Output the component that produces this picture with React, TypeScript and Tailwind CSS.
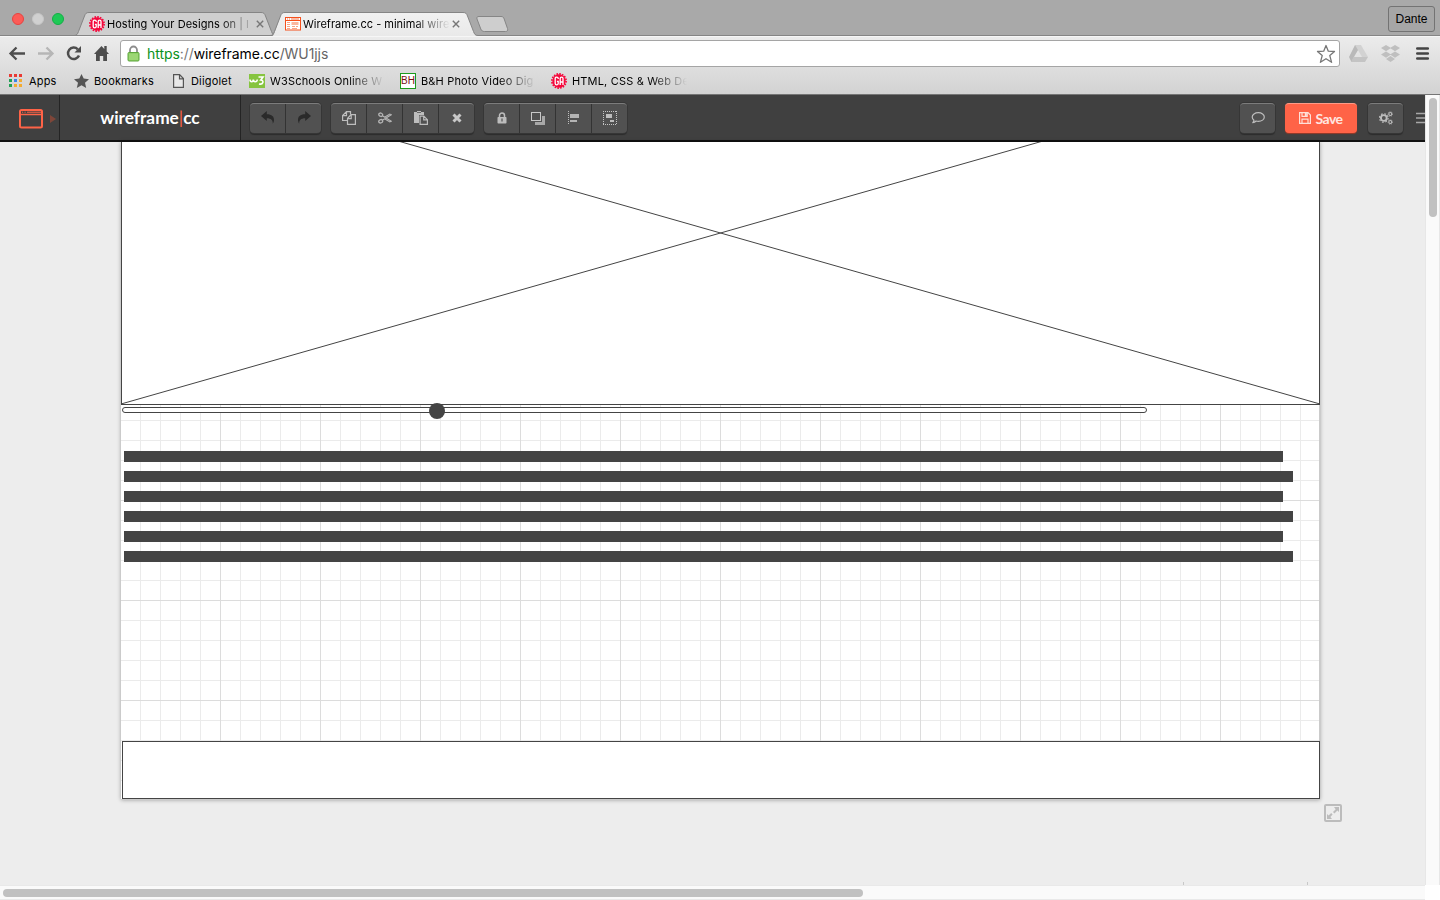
import React from "react";

function GaBadge() {
  return (
    <svg width="16" height="16" viewBox="0 0 16 16" className="block shrink-0">
      <circle cx="8" cy="8" r="6.700" fill="#f5083c" />
      <circle cx="8" cy="8" r="7.100" fill="none" stroke="#f5083c" strokeWidth="1.700" strokeDasharray="1.600 1.190" />
      <path d="M7.200 6V5.300c0-1.700-3-1.700-3 0v5.200c0 1.700 3 1.700 3 0V8.300H5.900" fill="none" stroke="#fff" strokeWidth="1.300" />
      <path d="M9.200 12V5.500c0-1.900 2.800-1.900 2.800 0V12M9.200 9h2.800" fill="none" stroke="#fff" strokeWidth="1.300" />
    </svg>
  );
}

function WireIcon() {
  return (
    <svg width="16" height="14" viewBox="0 0 16 14" className="block shrink-0">
      <rect x=".5" y=".5" width="15" height="12.500" fill="#fff" stroke="#f5501c" />
      <path d="M1 3.500h14" stroke="#f5501c" />
      <path d="M2 2h1M4 2h1M6 2h8" stroke="#f5501c" strokeWidth=".8" />
      <path d="M2 5.500h3M2 7.500h3M2 9.500h3M2 11.500h3M7 9.500h3M7 11.500h5M11 9.500h2" stroke="#f9a384" />
      <rect x="6.500" y="5" width="7" height="3" fill="#fbb79f" />
    </svg>
  );
}

function CloseX() {
  return (
    <svg width="8" height="8" viewBox="0 0 8 8" className="block shrink-0">
      <path d="M.8.8l6.400 6.400M7.200.8L.8 7.200" stroke="#777" strokeWidth="1.400" />
    </svg>
  );
}

const fade =
  "[mask-image:linear-gradient(to_right,#000_calc(100%_-_36px),transparent)]";

function TabStrip() {
  return (
    <div className="relative h-9 shrink-0 bg-[#a9a9a9]">
      <svg className="absolute inset-0" width="1440" height="36" viewBox="0 0 1440 36">
        <defs>
          <linearGradient id="tabFill" x1="0" y1="0" x2="0" y2="1">
            <stop offset="0" stopColor="#f1f1f1" />
            <stop offset="1" stopColor="#e9e9e9" />
          </linearGradient>
        </defs>
        <path d="M0 35.500H1440" stroke="#858585" />
        <path d="M74 35.500c3 0 3.500-1.500 4.500-4l6-15.500c1-2.600 1.800-3.500 4.500-3.500h172c2.700 0 3.500.9 4.500 3.500l6 15.500c1 2.500 1.500 4 4.500 4z" fill="#cfcfcf" stroke="#858585" />
        <path d="M270 36.500c3 0 3.500-1.500 4.500-4l6-16.500c1-2.600 1.800-3.500 4.500-3.500h178c2.700 0 3.500.9 4.500 3.500l6 15.500c1 2.500 1.500 4 4.500 4v1z" fill="url(#tabFill)" />
        <path d="M270 35.500c3 0 3.500-1.500 4.500-4l6-15.500c1-2.600 1.800-3.500 4.500-3.500h178c2.700 0 3.500.9 4.500 3.500l6 15.500c1 2.500 1.500 4 4.500 4" fill="none" stroke="#858585" />
        <path d="M479 16.500h22c2 0 2.600.8 3.200 2.500l3.300 9.500c.6 2-.2 3-2 3h-21c-2 0-3-.8-3.700-2.500L477 19c-.6-1.800.3-2.500 2-2.500z" fill="#cecece" stroke="#868686" />
      </svg>
      <div className="relative flex h-9 items-start">
        <div className="flex gap-2 pl-3 pt-[13px]">
          <div className="size-3 rounded-full border border-[#e64340] bg-[#fc5b57]" />
          <div className="size-3 rounded-full border border-[#c6c6c6] bg-[#d0d0d0]" />
          <div className="size-3 rounded-full border border-[#14ae46] bg-[#1fc956]" />
        </div>
        <div className="ml-[25px] mt-4 flex h-4 w-[175px] items-center">
          <GaBadge />
          <div className={`ml-[2px] w-[148px] overflow-hidden whitespace-nowrap font-[Inter,sans-serif] text-[11px] leading-4 tracking-[0.04px] text-black ${fade}`}>
            Hosting Your Designs on | I
          </div>
          <div className="ml-px">
            <CloseX />
          </div>
        </div>
        <div className="ml-[21px] mt-4 flex h-4 w-[175px] items-center">
          <WireIcon />
          <div className={`ml-[2px] w-[147px] overflow-hidden whitespace-nowrap font-[Inter,sans-serif] text-[11px] leading-4 text-black ${fade}`}>
            Wireframe.cc - minimal wire
          </div>
          <div className="ml-[2px]">
            <CloseX />
          </div>
        </div>
        <div className="ml-auto mr-[5px] mt-[6px] flex h-[26px] w-[47px] items-center justify-center rounded-[3px] border border-[#737373] bg-[#a6a6a6] font-['Liberation_Sans',Arial,sans-serif] text-xs text-black">
          Dante
        </div>
      </div>
    </div>
  );
}

function AddressBar() {
  return (
    <div className="flex h-8 shrink-0 items-start border-t border-[#f6f6f6] pt-[3px]">
      <svg width="120" height="28" viewBox="0 0 120 28" className="block shrink-0">
        <path d="M10.500 13.500H25M16.500 7.500l-6 6 6 6" fill="none" stroke="#4d4d4d" strokeWidth="2.300" />
        <path d="M38 13.500h14M46.500 7.500l6 6-6 6" fill="none" stroke="#b6b6b6" strokeWidth="2.300" />
        <path d="M77.800 9.300A5.700 5.700 0 1 0 79 15.500" fill="none" stroke="#4d4d4d" strokeWidth="2.500" />
        <path d="M81 6v6.500h-6.500z" fill="#4d4d4d" />
        <path d="M94 14l7.500-8 2.800 3V6h2.400v5.500L109 14h-2v7h-3.800v-5h-3.400v5H96v-7z" fill="#4d4d4d" />
      </svg>
      <div className="flex h-[27px] w-[1220px] items-center rounded-[3px] border border-[#a5a5a5] bg-white pl-[6px]">
        <svg width="13" height="17" viewBox="0 0 13 17" className="block">
          <path d="M3 8V5a3.500 3.500 0 0 1 7 0v3" fill="none" stroke="#8d8d8d" strokeWidth="1.800" />
          <rect x="1" y="7.500" width="11" height="8.500" rx="1" fill="#8fd067" stroke="#5da63c" />
          <path d="M2 10h9M2 12h9M2 14h9" stroke="#b0e08c" strokeWidth=".8" />
        </svg>
        <div className="ml-[7px] whitespace-nowrap font-[Inter,sans-serif] text-[14px] leading-5 tracking-[-0.07px] text-black">
          <span className="text-[#0b9220]">https</span>
          <span className="text-[#777]">://</span>wireframe.cc<span className="text-[#666]">/WU1jjs</span>
        </div>
        <svg width="20" height="20" viewBox="0 0 20 20" className="ml-auto mr-[3px] block">
          <path d="M10 1.500l2.300 5.700 6.200.3-4.700 4.100 1.800 6.700L10 14.700l-5.600 3.600 1.800-6.700-4.700-4.100 6.200-.3z" fill="#fff" stroke="#777" strokeWidth="1.300" strokeLinejoin="round" />
        </svg>
      </div>
      <svg width="100" height="28" viewBox="0 0 100 28" className="block shrink-0">
        <path d="M15 5h6l-6.500 11-3 6L9 17z" fill="#b9b9b9" />
        <path d="M15 5h6l7 12h-6z" fill="#d2d2d2" />
        <path d="M13.500 17H28l-3 5H11z" fill="#c4c4c4" />
        <path d="M46 5l5 3-5 3.200L41 8zM55 5l5 3-5 3.200L50 8zM46 11.600l5 3-5 3.200-5-3.200zM55 11.600l5 3-5 3.200-5-3.200zM50.500 16l4.500 3-4.500 3-4.500-3z" fill="#bfbfbf" />
        <path d="M77.300 8.500h10.500M77.300 13.500h10.500M77.300 18.500h10.500" stroke="#444" strokeWidth="2.600" strokeLinecap="round" />
      </svg>
    </div>
  );
}

const label =
  "whitespace-nowrap overflow-hidden font-[Inter,sans-serif] text-[11px] leading-4 tracking-[0.17px] text-black";

function Bookmarks() {
  return (
    <div className="flex h-[27px] shrink-0 items-center border-b border-[#757575] pl-[9px]">
      <svg width="13" height="14" viewBox="0 0 13 14" className="block">
        <path d="M0 1.500h3M5 1.500h3M10 1.500h3" stroke="#e93a34" strokeWidth="3" />
        <path d="M0 6.500h3M0 11.500h3" stroke="#22a155" strokeWidth="3" />
        <path d="M5 6.500h3" stroke="#3b84e8" strokeWidth="3" />
        <path d="M10 6.500h3M5 11.500h3M10 11.500h3" stroke="#f3ab31" strokeWidth="3" />
      </svg>
      <div className={`${label} ml-[7px] w-[45px]`}>Apps</div>
      <svg width="15" height="14" viewBox="0 0 15 14" className="block">
        <path d="M7.500 0l2.200 4.600 5.300.6-4 3.500L12.200 14l-4.700-2.800L2.800 14 4 8.700 0 5.200l5.300-.6z" fill="#555" />
      </svg>
      <div className={`${label} ml-[5px] w-[79px]`}>Bookmarks</div>
      <svg width="11" height="14" viewBox="0 0 11 14" className="block">
        <path d="M.6.600h6l3.800 4v8.800H.6zM6.500.8v4h4" fill="#e8e8e8" stroke="#555" strokeWidth="1.200" />
      </svg>
      <div className={`${label} ml-[7px] w-[58px]`}>Diigolet</div>
      <svg width="16" height="14" viewBox="0 0 16 14" className="block">
        <rect width="16" height="14" fill="#86c440" />
        <path d="M1 5.500c0 3 3.300 3 3.300 0 0 3 3.700 3 4 0M9.500 3h4.500l-2.200 3c3.500.2 2.500 5-1.800 4" fill="none" stroke="#fff" strokeWidth="1.600" />
      </svg>
      <div className={`${label} ml-[5px] w-[115px] ${fade}`}>W3Schools Online W</div>
      <div className="ml-[15px] flex size-4 items-center justify-center border border-[#1d9a1d] bg-white font-['Liberation_Sans',Arial,sans-serif] text-[10px] leading-none text-[#7b0d12]">
        BH
      </div>
      <div className={`${label} ml-[5px] w-[115px] ${fade}`}>B&amp;H Photo Video Dig</div>
      <div className="ml-[15px]">
        <GaBadge />
      </div>
      <div className={`${label} ml-[5px] w-[115px] ${fade}`}>HTML, CSS &amp; Web De</div>
    </div>
  );
}

function ToolGroup({ children }: { children: React.ReactNode }) {
  return (
    <div className="flex h-[30px] divide-x divide-[#333] overflow-hidden rounded-[4px] border-t border-[#7c7c7c] bg-[#515151] text-[#bdbdbd] shadow-[0_0_0_1px_#363636,0_2px_1px_#2c2c2c]">
      {children}
    </div>
  );
}

function Tool({ children }: { children: React.ReactNode }) {
  return <div className="flex h-[29px] w-9 items-center justify-center pb-[2px] last:w-[35px]">{children}</div>;
}

function Bend({ flip }: { flip?: boolean }) {
  return (
    <svg width="14" height="13" viewBox="0 0 14 13" className={flip ? "-scale-x-100" : ""}>
      <path d="M0 5L5.800 0v3.200c5 0 7.600 2.300 7.200 6.300-.1 1.300-.6 2.300-1.200 3.200.2-3.600-1.600-5.400-6-5.500V10z" fill="#2a2a2a" />
    </svg>
  );
}

function Gear({ x, y, r, w }: { x: number; y: number; r: number; w: number }) {
  const step = (2 * Math.PI * (r + w * 0.75)) / 16;
  return (
    <g fill="none" stroke="#bdbdbd">
      <circle cx={x} cy={y} r={r} strokeWidth={w} />
      <circle cx={x} cy={y} r={r + w * 0.75} strokeWidth={w * 0.6} strokeDasharray={`${step} ${step}`} />
    </g>
  );
}

function Toolbar() {
  return (
    <div className="flex h-[47px] shrink-0 overflow-hidden border-b-2 border-[#111] bg-[#404040]">
      <div className="flex w-[60px] shrink-0 items-center border-r border-[#242424] pl-[19px] pt-[2px]">
        <svg width="37" height="20" viewBox="0 0 37 20" className="block">
          <rect x="1" y="1" width="22" height="17.500" rx="1.500" fill="none" stroke="#ff6347" strokeWidth="2" />
          <path d="M1 5.500h22" stroke="#ff6347" strokeWidth="1.500" />
          <path d="M3 3.200h1.200M5.500 3.200h1.200M8 3.200h14" stroke="#ff6347" strokeWidth="1" />
          <path d="M31 6l6 4-6 4z" fill="#7f4639" />
        </svg>
      </div>
      <div className="flex w-[181px] shrink-0 items-center justify-center border-r border-[#242424] font-[Lato,sans-serif] text-[17.300px] font-bold text-white">
        wireframe<span className="font-normal text-[#ff6347]">|</span>cc
      </div>
      <div className="flex shrink-0 gap-[10px] pl-[9px] pt-2">
        <ToolGroup>
          <Tool><Bend /></Tool>
          <Tool><Bend flip /></Tool>
        </ToolGroup>
        <ToolGroup>
          <Tool>
            <svg width="14" height="14" viewBox="0 0 14 14" fill="none" stroke="#bdbdbd" strokeWidth="1.200">
              <path d="M5.500 9.500H.6V4.500L4.500.6h4v3M4.500.600v4H.6" />
              <path d="M5.500 7.500l3.500-3.900h4.400v9.800H5.500zM9.200 3.600v4H5.500" />
            </svg>
          </Tool>
          <Tool>
            <svg width="14" height="12" viewBox="0 0 14 12" fill="none" stroke="#b4b4b4" strokeWidth="1.300">
              <ellipse cx="2.700" cy="2.700" rx="2" ry="1.600" transform="rotate(25 2.700 2.700)" />
              <ellipse cx="2.700" cy="9.300" rx="2" ry="1.600" transform="rotate(-25 2.700 9.300)" />
              <path d="M4.300 3.800L8 6l5.300 3.200-1.500.7L6.500 6.700M4.300 8.200L8 6l5.300-3.200-1.500-.7L6.500 5.300" strokeWidth="1.100" />
            </svg>
          </Tool>
          <Tool>
            <svg width="14" height="14" viewBox="0 0 14 14">
              <path d="M0 1h3V0h4v1h3v3H5v8H0z" fill="#bdbdbd" />
              <path d="M3 1.500h4" stroke="#515151" strokeWidth=".8" />
              <path d="M6.100 5.100h3.700l3.600 3.600v4.700H6.100zM9.700 5.100v3.700h3.700" fill="none" stroke="#bdbdbd" strokeWidth="1.200" />
            </svg>
          </Tool>
          <Tool>
            <svg width="10" height="10" viewBox="0 0 10 10">
              <path d="M1.500 1.500l7 7M8.500 1.500l-7 7" stroke="#c8c8c8" strokeWidth="3" />
            </svg>
          </Tool>
        </ToolGroup>
        <ToolGroup>
          <Tool>
            <svg width="10" height="12" viewBox="0 0 10 12">
              <path d="M2.500 6V3.500a2.500 2.500 0 0 1 5 0V6" fill="none" stroke="#bdbdbd" strokeWidth="1.500" />
              <rect x=".5" y="5" width="9" height="6.500" rx=".8" fill="#bdbdbd" />
              <path d="M5 6.500v3" stroke="#515151" strokeWidth="1.200" />
            </svg>
          </Tool>
          <Tool>
            <svg width="14" height="13" viewBox="0 0 14 13" className="mt-px" shapeRendering="crispEdges">
              <path d="M11 4h3v9H4v-3h7z" fill="#a8a8a8" />
              <rect x=".5" y=".5" width="9" height="8" fill="#515151" stroke="#c8c8c8" />
            </svg>
          </Tool>
          <Tool>
            <svg width="12" height="14" viewBox="0 0 12 14" shapeRendering="crispEdges">
              <path d="M.5 0v14" stroke="#bdbdbd" strokeDasharray="1 1" />
              <path d="M2 3h9v4H2zM2 9h7v2H2z" fill="#b4b4b4" />
            </svg>
          </Tool>
          <Tool>
            <svg width="14" height="14" viewBox="0 0 14 14" shapeRendering="crispEdges">
              <path d="M0 .5h14M0 13.500h14M.5 0v14M13.500 0v14" fill="none" stroke="#c4c4c4" strokeDasharray="1 1" />
              <path d="M3 3h6v4H3zM7 9h4v2H7z" fill="#bdbdbd" />
            </svg>
          </Tool>
        </ToolGroup>
      </div>
      <div className="ml-auto flex shrink-0 items-start pt-2">
        <ToolGroup>
          <Tool>
            <svg width="14" height="12" viewBox="0 0 14 12">
              <path d="M7.300.700c3.400 0 6 1.900 6 4.300s-2.600 4.300-6 4.300c-.8 0-1.500-.1-2.200-.3-.9.900-1.900 1.500-3.300 1.700.6-.7 1-1.500 1.200-2.500C1.900 7.400 1.200 6.300 1.200 5 1.200 2.600 3.900.7 7.300.7z" fill="none" stroke="#bdbdbd" strokeWidth="1.200" strokeLinejoin="round" />
            </svg>
          </Tool>
        </ToolGroup>
        <div className="ml-[10px] flex h-[30px] w-[72px] items-center justify-center gap-[4px] rounded-[4px] border-t border-[#ff9a86] bg-[#ff6347] shadow-[0_1px_1px_#9a3a28]">
          <svg width="12" height="12" viewBox="0 0 12 12" className="-mt-px block" fill="none" stroke="#ffe0d8" strokeWidth="1.200">
            <path d="M.6.600h8.400l2.400 2.400v8.400H.6z" />
            <path d="M3 11V7.100h6V11M3 1v3.400h5.200V1" />
            <path d="M5.800 1h2v3h-2z" fill="#ffe0d8" stroke="none" />
          </svg>
          <span className="font-[Lato,sans-serif] text-[14px] font-bold tracking-[-0.500px] text-[#ffe6e0]">Save</span>
        </div>
        <div className="ml-[11px]">
          <ToolGroup>
            <Tool>
              <svg width="14" height="14" viewBox="0 0 14 14">
                <Gear x={4.8} y={7} r={2.9} w={1.9} />
                <Gear x={11.3} y={3} r={1.5} w={1.100} />
                <Gear x={11.3} y={11} r={1.5} w={1.100} />
              </svg>
            </Tool>
          </ToolGroup>
        </div>
        <svg width="9" height="30" viewBox="0 0 9 30" className="ml-[13px] block">
          <path d="M0 10.500h9M0 15h9M0 19.500h9" stroke="#a8a8a8" strokeWidth="1.600" />
        </svg>
      </div>
    </div>
  );
}

function Canvas() {
  return (
    <div className="relative ml-[121px] flex h-[658px] w-[1199px] flex-col border-b border-r border-[#cbcbcb] bg-white bg-[linear-gradient(to_right,#dcdcdc_1px,transparent_1px),linear-gradient(to_bottom,#dcdcdc_1px,transparent_1px),linear-gradient(to_right,#ebebeb_1px,transparent_1px),linear-gradient(to_bottom,#ebebeb_1px,transparent_1px)] bg-[length:100px_100px,100px_100px,20px_20px,20px_20px] bg-[position:99px_58px,99px_58px,19px_18px,19px_18px] shadow-[0_0_4px_rgba(0,0,0,0.35)]">
      <div className="-mr-px h-[263px] shrink-0 border-x border-b border-[#444] bg-white">
        <svg width="1197" height="262" viewBox="1 0 1197 262" className="block">
          <path d="M0 262L1199-80M0-80L1199 262" stroke="#444" strokeWidth="1" />
        </svg>
      </div>
      <div className="relative ml-px mt-[2px] h-[6px] w-[1025px] shrink-0 rounded-full border border-[#444] bg-white">
        <div className="absolute left-[306px] top-[-5px] size-4 rounded-full bg-[#444]" />
      </div>
      <div className="ml-[3px] mt-[38px] flex flex-col gap-[9px]">
        <div className="h-[11px] w-[1159px] bg-[#444]" />
        <div className="h-[11px] w-[1169px] bg-[#444]" />
        <div className="h-[11px] w-[1159px] bg-[#444]" />
        <div className="h-[11px] w-[1169px] bg-[#444]" />
        <div className="h-[11px] w-[1159px] bg-[#444]" />
        <div className="h-[11px] w-[1169px] bg-[#444]" />
      </div>
      <div className="-mr-px ml-px mt-auto h-[58px] shrink-0 border border-[#444] bg-white" />
    </div>
  );
}

function ResizeHandle() {
  return (
    <svg width="18" height="18" viewBox="0 0 18 18" className="ml-[1324px] mt-1 block shrink-0">
      <rect x="1" y="1" width="16" height="16" rx="1" fill="none" stroke="#bcbcbc" strokeWidth="2" />
      <path d="M15 3v5l-1.600-1.600-3 3L9 8l2.700-2.700L10 3zM3 15v-5l1.600 1.600L7.200 9l1.400 1.400L6.400 13 8 15z" fill="#bcbcbc" />
    </svg>
  );
}

export default function App() {
  return (
    <div className="flex h-[900px] w-[1440px] flex-col overflow-hidden bg-white">
      <TabStrip />
      <div className="flex h-[59px] shrink-0 flex-col bg-linear-to-b from-[#ececec] to-[#d2d2d2]">
        <AddressBar />
        <Bookmarks />
      </div>
      <div className="flex h-[790px] shrink-0">
        <div className="flex w-[1425px] flex-col overflow-hidden bg-[#ededed]">
          <Toolbar />
          <Canvas />
          <ResizeHandle />
          <div className="ml-[1183px] mt-auto h-[3px] w-[125px] shrink-0 border-x border-[#c8c8c8]" />
        </div>
        <div className="w-[15px] border-x border-[#e7e7e7] bg-[#fafafa] pl-[3px] pt-[3px]">
          <div className="h-[119px] w-2 rounded-full bg-[#c1c1c1]" />
        </div>
      </div>
      <div className="h-[15px] w-[1425px] shrink-0 border-y border-[#e9e9e9] bg-[#fafafa] pl-[3px] pt-[3px]">
        <div className="h-2 w-[860px] rounded-full bg-[#c1c1c1]" />
      </div>
    </div>
  );
}
